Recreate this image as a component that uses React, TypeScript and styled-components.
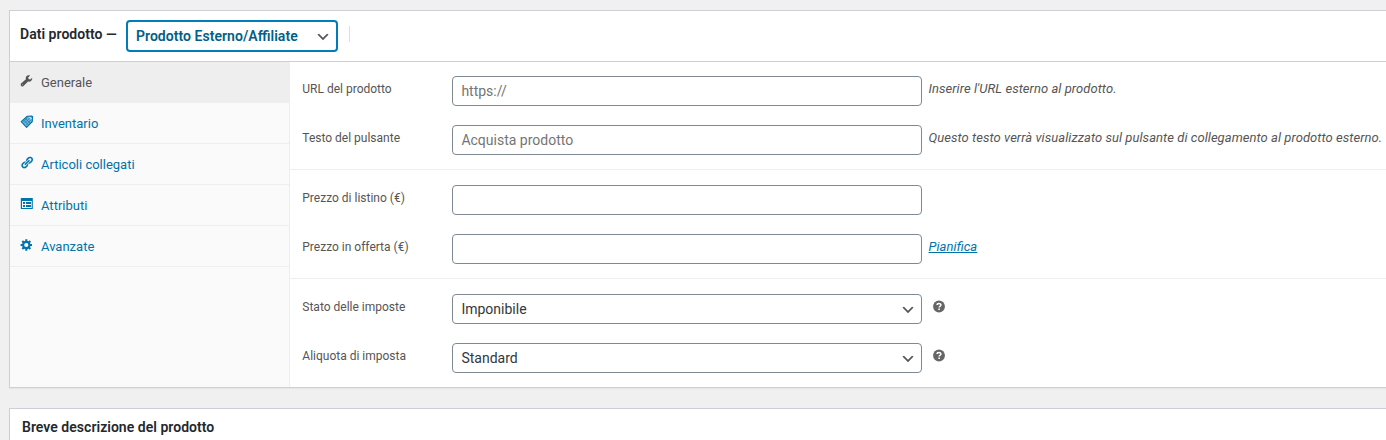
import React from 'react';
import styled, { createGlobalStyle } from 'styled-components';

const GlobalStyle = createGlobalStyle`
  * { box-sizing: border-box; }
  body {
    margin: 0;
    background: #f0f0f0;
    color: #555;
    font-family: Roboto, "Liberation Sans", sans-serif;
    font-size: 13px;
    overflow: hidden;
  }
`;

const Page = styled.main`
  display: flex;
  flex-direction: column;
  gap: 20px;
  height: 440px;
  padding: 10px 0 0 9px;
  overflow: hidden;
`;

const Panel = styled.section`
  flex: none;
  background: #fff;
  border: 1px solid #ccd0d4;
  border-right: 0;
  box-shadow: 0 1px 1px rgba(0, 0, 0, 0.04);
`;

const PanelHeader = styled.header`
  display: flex;
  align-items: flex-start;
  height: 51px;
  padding: 9px 0 0 10px;
  border-bottom: 1px solid #ccd0d4;
`;

const PanelTitle = styled.h2`
  margin: 0;
  padding-top: 4px;
  width: 106px;
  font-size: 14px;
  line-height: 20px;
  font-weight: 600;
  letter-spacing: 0.03px;
  color: #23282d;
  white-space: nowrap;
`;

const TypeSelect = styled.button`
  display: flex;
  align-items: center;
  justify-content: space-between;
  width: 212px;
  height: 32px;
  padding: 0 5px 0 8px;
  border: 2px solid #007cba;
  border-radius: 4px;
  background: #fff;
  color: #016087;
  font: 600 14px/28px Roboto, "Liberation Sans", sans-serif;
  letter-spacing: 0.04px;
  font-feature-settings: "liga" 1;

  svg { margin-top: 2px; }
`;

const HeaderDivider = styled.span`
  width: 1px;
  height: 16px;
  margin: 6px 0 0 11px;
  background: #dfdfdf;
`;

const Body = styled.div`
  display: flex;
  height: 325px;
`;

const Tabs = styled.nav`
  flex: none;
  width: 280px;
  background: #fafafa;
  border-right: 1px solid #eee;
`;

const Tab = styled.a<{ $active?: boolean }>`
  display: flex;
  align-items: flex-start;
  gap: 7px;
  height: 41px;
  padding: 12px 10px 0;
  border-bottom: 1px solid #eee;
  background: ${(p) => (p.$active ? '#eee' : 'transparent')};
  margin-right: ${(p) => (p.$active ? '-1px' : '0')};
  color: ${(p) => (p.$active ? '#555' : '#0073aa')};
  font-size: 13px;
  line-height: 18px;

  svg { flex: none; display: block; }
`;

const Fields = styled.div`
  flex: 1;
  min-width: 0;
`;

const Group = styled.div<{ $first?: boolean }>`
  display: flex;
  flex-direction: column;
  gap: 19px;
  padding: ${(p) => (p.$first ? '14px' : '15px')} 0 14px 12px;
  border-bottom: 1px solid #eee;
  &:last-child { border-bottom: 0; }
`;

const Row = styled.div`
  display: flex;
  align-items: flex-start;
  height: 30px;
`;

const Label = styled.label`
  flex: none;
  width: 150px;
  padding: 1px 0 0 0.3px;
  font-size: 12px;
  line-height: 24px;
`;

const Input = styled.input`
  flex: none;
  width: 470px;
  height: 30px;
  padding: 0 8.4px;
  border: 1px solid #7e8993;
  border-radius: 4px;
  background: #fff;
  font: 14px/28px Roboto, "Liberation Sans", sans-serif;
  &::placeholder { color: #757575; opacity: 1; }
`;

const Select = styled.button`
  flex: none;
  display: flex;
  align-items: center;
  justify-content: space-between;
  width: 470px;
  height: 30px;
  padding: 0 5px 0 8.4px;
  border: 1px solid #7e8993;
  border-radius: 4px;
  background: #fff;
  color: #32373c;
  font: 14px/28px Roboto, "Liberation Sans", sans-serif;

  svg { margin-top: 2px; }
`;

const Description = styled.span`
  padding-left: 6.5px;
  font-size: 13px;
  line-height: 25px;
  font-style: italic;
  letter-spacing: 0.05px;
  font-feature-settings: "liga" 1;
  white-space: nowrap;
`;

const Link = styled.a`
  color: #0073aa;
  text-decoration: underline;
`;

const Help = styled.span`
  display: flex;
  padding: 6px 0 0 11px;
`;

const NextTitle = styled(PanelTitle)`
  height: 40px;
  width: auto;
  padding: 8px 12px;
`;

const Chevron = () => (
  <svg width="16" height="16" viewBox="0 0 20 20">
    <path d="M5 6l5 5 5-5 2 1-7 7-7-7 2-1z" fill="#555" />
  </svg>
);

const WrenchIcon = () => (
  <svg width="14" height="14" viewBox="0 0 14 14" fill="currentColor">
    <path d="M12.2 3.8 10.2 5.5 8.6 5.1 8.2 3.4 10.1 1.6C8.5 1 6.7 1.6 6 3c-.4.8-.4 1.5-.1 2.2L1.3 9.3c-.8.7-.8 1.9-.1 2.6s1.9.7 2.6-.1L8 7.6c2.5.7 4.6-1.3 4.2-3.8zM2.6 11.2a.45.45 0 1 1 0-.9.45.45 0 0 1 0 .9z" />
  </svg>
);

const TagIcon = () => (
  <svg width="14" height="14" viewBox="0 0 14 14">
    <path d="M1.2 6.7 7 1.3l4.9-.2.6.6-.2 4.8-5.7 5.9z" fill="#72b4d4" stroke="#0073aa" strokeWidth="1.1" strokeLinejoin="round" />
    <path d="m3 6.7 4.6-4.3M4.5 8.2l4.9-4.9M6.1 9.8 11 4.9M3.8 5.2l4.5 4.5M5.6 3.6 10 8" stroke="#0073aa" strokeWidth=".6" />
    <path d="m9.4 1.9 2.2 2.2" stroke="#e8f4f9" strokeWidth="1" />
  </svg>
);

const LinkIcon = () => (
  <svg width="14" height="14" viewBox="0 .7 20.5 20" fill="currentColor">
    <path stroke="currentColor" strokeWidth=".2" d="M17.74 2.76c1.68 1.69 1.68 4.41 0 6.1l-1.53 1.52c-1.12 1.12-2.7 1.47-4.14 1.09l2.62-2.61.76-.77.76-.76c.84-.84.84-2.2 0-3.04-.84-.85-2.2-.85-3.04 0l-.77.76-3.38 3.38c-.37-1.44-.02-3.02 1.1-4.14l1.52-1.53c1.69-1.68 4.42-1.68 6.1 0zM8.59 13.43l5.34-5.34c.42-.42.42-1.1 0-1.52-.44-.43-1.13-.39-1.53 0l-5.33 5.34c-.42.42-.42 1.1 0 1.52.44.43 1.13.39 1.52 0zm-.76 2.29l4.14-4.15c.38 1.44.03 3.02-1.09 4.14l-1.52 1.53c-1.69 1.68-4.41 1.68-6.1 0-1.68-1.68-1.68-4.42 0-6.1l1.53-1.52c1.12-1.12 2.7-1.47 4.14-1.1l-4.14 4.15c-.85.84-.85 2.2 0 3.05.84.84 2.2.84 3.04 0z" />
  </svg>
);

const ListIcon = () => (
  <svg width="14" height="14" viewBox="0 0 14 14">
    <rect x=".8" y="1.1" width="12" height="10.9" rx=".5" fill="#0073aa" />
    <path d="M2 4h9.7v7H2z" fill="#fafafa" />
    <path d="M3 5h2v2H3zM6 5h5v2H6zM3 8h2v2H3zM6 8h5v2H6z" fill="#0073aa" />
  </svg>
);

const GearIcon = () => (
  <svg width="14" height="14" viewBox="0 0 14 14">
    <circle cx="6.3" cy="7" r="3.2" fill="none" stroke="#0073aa" strokeWidth="2.2" />
    <path d="M6.3 1.3v2M6.3 10.7v2M.6 7h2M10 7h2M2.3 3l1.4 1.4M8.9 9.6l1.4 1.4M10.3 3 8.9 4.4M3.7 9.6 2.3 11" stroke="#0073aa" strokeWidth="2.1" />
  </svg>
);

const HelpIcon = () => (
  <svg width="12" height="13" viewBox="0 0 12 13">
    <circle cx="6" cy="6.5" r="5.9" fill="#666" />
    <path d="M4.1 5.1c0-2.1 3.8-2.1 3.8-.1 0 1.3-1.8 1.2-1.8 2.6" fill="none" stroke="#fff" strokeWidth="1.5" />
    <path d="M5.3 8.4h1.6V10H5.3z" fill="#fff" />
  </svg>
);

export default function App() {
  return (
    <>
      <GlobalStyle />
      <Page>
        <Panel>
          <PanelHeader>
            <PanelTitle>Dati prodotto —</PanelTitle>
            <TypeSelect>Prodotto Esterno/Affiliate<Chevron /></TypeSelect>
            <HeaderDivider />
          </PanelHeader>
          <Body>
            <Tabs>
              <Tab $active><WrenchIcon />Generale</Tab>
              <Tab><TagIcon />Inventario</Tab>
              <Tab><LinkIcon />Articoli collegati</Tab>
              <Tab><ListIcon />Attributi</Tab>
              <Tab><GearIcon />Avanzate</Tab>
            </Tabs>
            <Fields>
              <Group $first>
                <Row>
                  <Label>URL del prodotto</Label>
                  <Input placeholder="https://" />
                  <Description>Inserire l'URL esterno al prodotto.</Description>
                </Row>
                <Row>
                  <Label>Testo del pulsante</Label>
                  <Input placeholder="Acquista prodotto" />
                  <Description>Questo testo verrà visualizzato sul pulsante di collegamento al prodotto esterno.</Description>
                </Row>
              </Group>
              <Group>
                <Row>
                  <Label>Prezzo di listino (€)</Label>
                  <Input />
                </Row>
                <Row>
                  <Label>Prezzo in offerta (€)</Label>
                  <Input />
                  <Description><Link>Pianifica</Link></Description>
                </Row>
              </Group>
              <Group>
                <Row>
                  <Label>Stato delle imposte</Label>
                  <Select>Imponibile<Chevron /></Select>
                  <Help><HelpIcon /></Help>
                </Row>
                <Row>
                  <Label>Aliquota di imposta</Label>
                  <Select>Standard<Chevron /></Select>
                  <Help><HelpIcon /></Help>
                </Row>
              </Group>
            </Fields>
          </Body>
        </Panel>
        <Panel>
          <NextTitle as="h2">Breve descrizione del prodotto</NextTitle>
        </Panel>
      </Page>
    </>
  );
}
